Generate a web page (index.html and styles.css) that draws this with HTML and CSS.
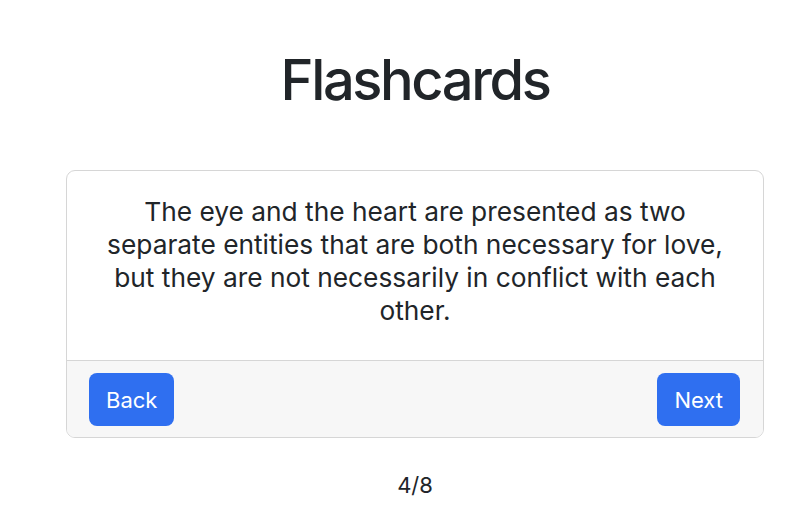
FILE: index.html
```html
<!DOCTYPE html>
<html>
<head>
<meta charset="utf-8">
<link rel="stylesheet" href="styles.css">
</head>
<body>
<main class="page">
  <h1 class="title">Flashcards</h1>
  <section class="card">
    <div class="card-body">
      <p class="card-text">The eye and the heart are presented as two separate entities that are both necessary for love, but they are not necessarily in conflict with each other.</p>
    </div>
    <div class="card-footer">
      <button class="btn">Back</button>
      <button class="btn">Next</button>
    </div>
  </section>
  <p class="counter">4/8</p>
</main>
</body>
</html>
```

FILE: styles.css
```css
html, body {
  margin: 0;
  padding: 0;
  background: #ffffff;
}
body {
  font-family: Inter, "Liberation Sans", sans-serif;
  color: #212529;
}
.page {
  display: flex;
  flex-direction: column;
  align-items: center;
  padding: 52px 0 0 24px;
}
.title {
  margin: 0;
  font-size: 56px;
  font-weight: 500;
  line-height: 56px;
  letter-spacing: -2.4px;
}
.card {
  margin-top: 62px;
  width: 698px;
  box-sizing: border-box;
  border: 1px solid #d6d6d6;
  border-radius: 9px;
  overflow: hidden;
}
.card-body {
  padding: 24px 30px 33px;
}
.card-text {
  margin: 0;
  text-align: center;
  font-size: 26.3px;
  line-height: 33px;
}
.card-footer {
  display: flex;
  justify-content: space-between;
  padding: 12px 23px 11px 22px;
  background: #f7f7f7;
  border-top: 1px solid #d6d6d6;
}
.btn {
  font-family: inherit;
  font-size: 22px;
  color: #ffffff;
  background: #2f6ff0;
  border: none;
  border-radius: 8px;
  padding: 0 17px;
  height: 53px;
}
.counter {
  margin: 32px 0 0;
  font-size: 22px;
  line-height: 30px;
}
```
